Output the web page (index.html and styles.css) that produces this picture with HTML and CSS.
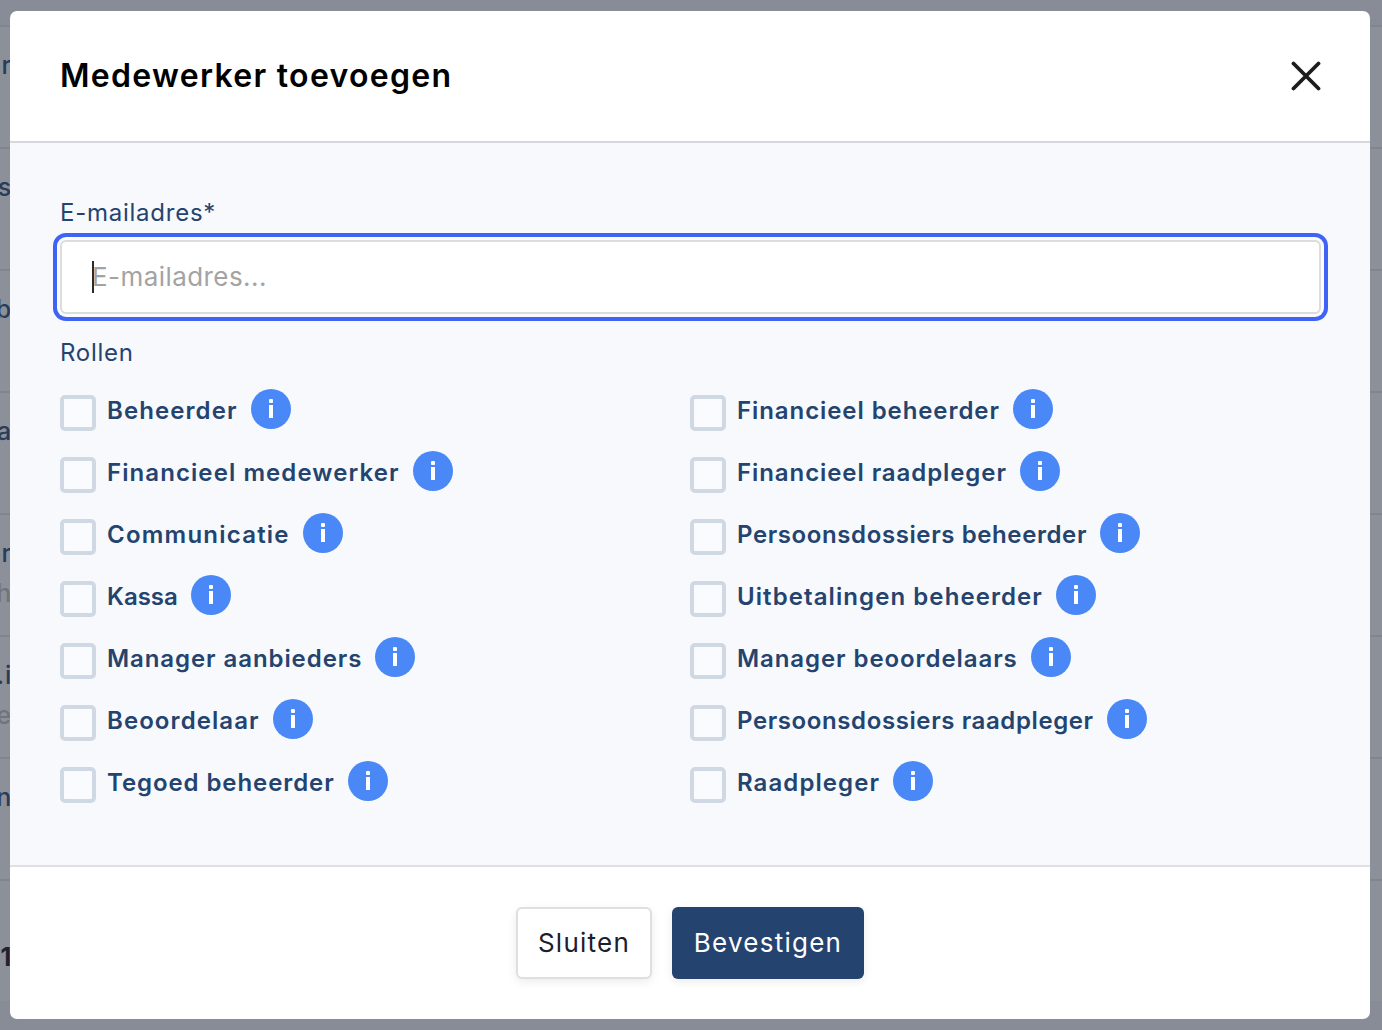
FILE: index.html
```html
<!DOCTYPE html>
<html lang="nl">
<head>
<meta charset="utf-8">
<title>Medewerker toevoegen</title>
<link rel="stylesheet" href="styles.css">
</head>
<body>
<div class="page">
  <div class="row"><span class="frag">er</span></div>
  <div class="row"><span class="frag">s</span></div>
  <div class="row"><span class="frag">ob</span></div>
  <div class="row"><span class="frag">va</span></div>
  <div class="row"><span class="frag">or</span><span class="frag sub">h</span></div>
  <div class="row"><span class="frag">.i</span><span class="frag sub">e</span></div>
  <div class="row"><span class="frag">n</span></div>
  <div class="row"><span class="frag strong">1</span></div>
</div>
<div class="overlay">
  <div class="modal">
    <header class="modal-head">
      <h1 class="modal-title">Medewerker toevoegen</h1>
      <svg class="close" viewBox="0 0 30 30" width="30" height="30" aria-label="Sluiten"><path d="M2.5 2.5 27.5 27.5M27.5 2.5 2.5 27.5"/></svg>
    </header>
    <div class="modal-body">
      <label class="field-label">E-mailadres*</label>
      <div class="input"><span class="caret"></span><span class="placeholder">E-mailadres...</span></div>
      <div class="field-label roles-label">Rollen</div>
      <div class="roles">
        <div class="role"><span class="box"></span><span class="role-name wide">Beheerder</span><span class="info"><i class="dot"></i><i class="stem"></i></span></div>
        <div class="role"><span class="box"></span><span class="role-name">Financieel beheerder</span><span class="info"><i class="dot"></i><i class="stem"></i></span></div>
        <div class="role"><span class="box"></span><span class="role-name wide">Financieel medewerker</span><span class="info"><i class="dot"></i><i class="stem"></i></span></div>
        <div class="role"><span class="box"></span><span class="role-name">Financieel raadpleger</span><span class="info"><i class="dot"></i><i class="stem"></i></span></div>
        <div class="role"><span class="box"></span><span class="role-name wider">Communicatie</span><span class="info"><i class="dot"></i><i class="stem"></i></span></div>
        <div class="role"><span class="box"></span><span class="role-name narrow">Persoonsdossiers beheerder</span><span class="info"><i class="dot"></i><i class="stem"></i></span></div>
        <div class="role"><span class="box"></span><span class="role-name flat">Kassa</span><span class="info"><i class="dot"></i><i class="stem"></i></span></div>
        <div class="role"><span class="box"></span><span class="role-name wide">Uitbetalingen beheerder</span><span class="info"><i class="dot"></i><i class="stem"></i></span></div>
        <div class="role"><span class="box"></span><span class="role-name">Manager aanbieders</span><span class="info"><i class="dot"></i><i class="stem"></i></span></div>
        <div class="role"><span class="box"></span><span class="role-name">Manager beoordelaars</span><span class="info"><i class="dot"></i><i class="stem"></i></span></div>
        <div class="role"><span class="box"></span><span class="role-name wide">Beoordelaar</span><span class="info"><i class="dot"></i><i class="stem"></i></span></div>
        <div class="role"><span class="box"></span><span class="role-name narrow">Persoonsdossiers raadpleger</span><span class="info"><i class="dot"></i><i class="stem"></i></span></div>
        <div class="role"><span class="box"></span><span class="role-name">Tegoed beheerder</span><span class="info"><i class="dot"></i><i class="stem"></i></span></div>
        <div class="role"><span class="box"></span><span class="role-name wide">Raadpleger</span><span class="info"><i class="dot"></i><i class="stem"></i></span></div>
      </div>
    </div>
    <footer class="modal-foot">
      <div class="btn btn-light">Sluiten</div>
      <div class="btn btn-dark">Bevestigen</div>
    </footer>
  </div>
</div>
</body>
</html>
```
FILE: styles.css
```css
* { box-sizing: border-box; }
html, body { margin: 0; height: 100%; overflow: hidden; }
body { font-family: Inter, "Liberation Sans", sans-serif; background: #8c9099; }
.page { position: relative; padding-top: 25px; background: #878c96; height: 1030px; }
.row {
  height: 122px;
  width: 100%;
  background: #8c9099;
  border-top: 2px solid #81858e;
  padding: 22px 0 0;
  display: flex; flex-direction: column; align-items: flex-start;
}
.frag { width: 12px; display: flex; justify-content: flex-end; overflow: hidden; font-size: 25px; line-height: 32px; letter-spacing: .8px; color: #2a3c5c; white-space: nowrap; font-weight: 500; }
.sub { color: #70747c; margin-top: 8px; }
.strong { color: #1d222c; font-weight: 700; margin-top: 38px; }

.overlay {
  position: absolute; inset: 0;
  padding: 11px 12px 11px 10px;
  display: flex;
}
.modal {
  flex: 1; display: flex; flex-direction: column;
  background: #fff; border-radius: 7px; overflow: hidden;
}
.modal-head {
  height: 132px; flex: none;
  display: flex; align-items: center; justify-content: space-between;
  padding: 0 49px 0 50px;
  border-bottom: 2px solid #d5d8de;
}
.modal-title { margin: 0; font-size: 32px; line-height: 40px; font-weight: 600; color: #000; letter-spacing: 1.3px; }
.close { display: block; }
.close path { fill: none; stroke: #1c1c1c; stroke-width: 3.8; stroke-linecap: round; }
.modal-body {
  flex: 1; background: #f7f9fd;
  padding: 54px 49px 0 50px;
}
.field-label { display: block; font-size: 24px; line-height: 32px; color: #24446f; font-weight: 400; letter-spacing: .75px; }
.input {
  margin-top: 11px;
  height: 74px; width: 1261px;
  background: #fff; border: 2px solid #dcdcdc; border-radius: 6px;
  box-shadow: 0 0 0 3px #fafbfe, 0 0 0 7px #3f63f5;
  display: flex; align-items: center; padding-left: 30px; position: relative;
}
.caret { position: absolute; left: 30px; top: 19px; width: 2px; height: 32px; background: #2b2b2b; }
.placeholder { font-size: 26px; color: #a3a3a3; line-height: 34px; letter-spacing: .43px; }
.roles-label { margin-top: 23px; }
.roles {
  margin-top: 10px;
  display: grid; grid-template-columns: 630px 630px; grid-auto-rows: 62px;
}
.role { display: flex; align-items: center; }
.box {
  width: 36px; height: 36px; flex: none; margin-top: 6px;
  border: 4px solid #d0d9e3; border-radius: 5px; background: #fafbfe;
}
.role-name { margin: 2px 0 0 11px; font-size: 24px; line-height: 32px; font-weight: 600; color: #24446f; white-space: nowrap; letter-spacing: .92px; }
.role-name.wide { letter-spacing: 1.08px; }
.role-name.wider { letter-spacing: 1.22px; }
.role-name.narrow { letter-spacing: .6px; }
.role-name.flat { letter-spacing: 0; }
.info {
  margin-left: 13px; margin-top: -2px; width: 40px; height: 40px; flex: none; border-radius: 50%;
  background: #4a88f7;
  display: flex; flex-direction: column; align-items: center;
  padding: 10px 0 0;
}
.dot { width: 4px; height: 4px; background: #fff; border-radius: 1px; }
.stem { width: 4px; height: 13px; margin-top: 2px; background: #fff; }
.modal-foot {
  flex: none; height: 154px;
  border-top: 2px solid #dfe0e4;
  display: flex; justify-content: center; align-items: center; gap: 20px;
}
.btn {
  height: 72px; border-radius: 6px; font-size: 26px; line-height: 34px;
  display: flex; align-items: center; justify-content: center;
  letter-spacing: 1.25px;
  box-shadow: 0 3px 10px rgba(0,0,0,.08);
}
.btn-light { width: 136px; background: #fff; border: 2px solid #dfdfdf; color: #1a202c; }
.btn-dark { width: 192px; background: #24446f; color: #fff; }
```
